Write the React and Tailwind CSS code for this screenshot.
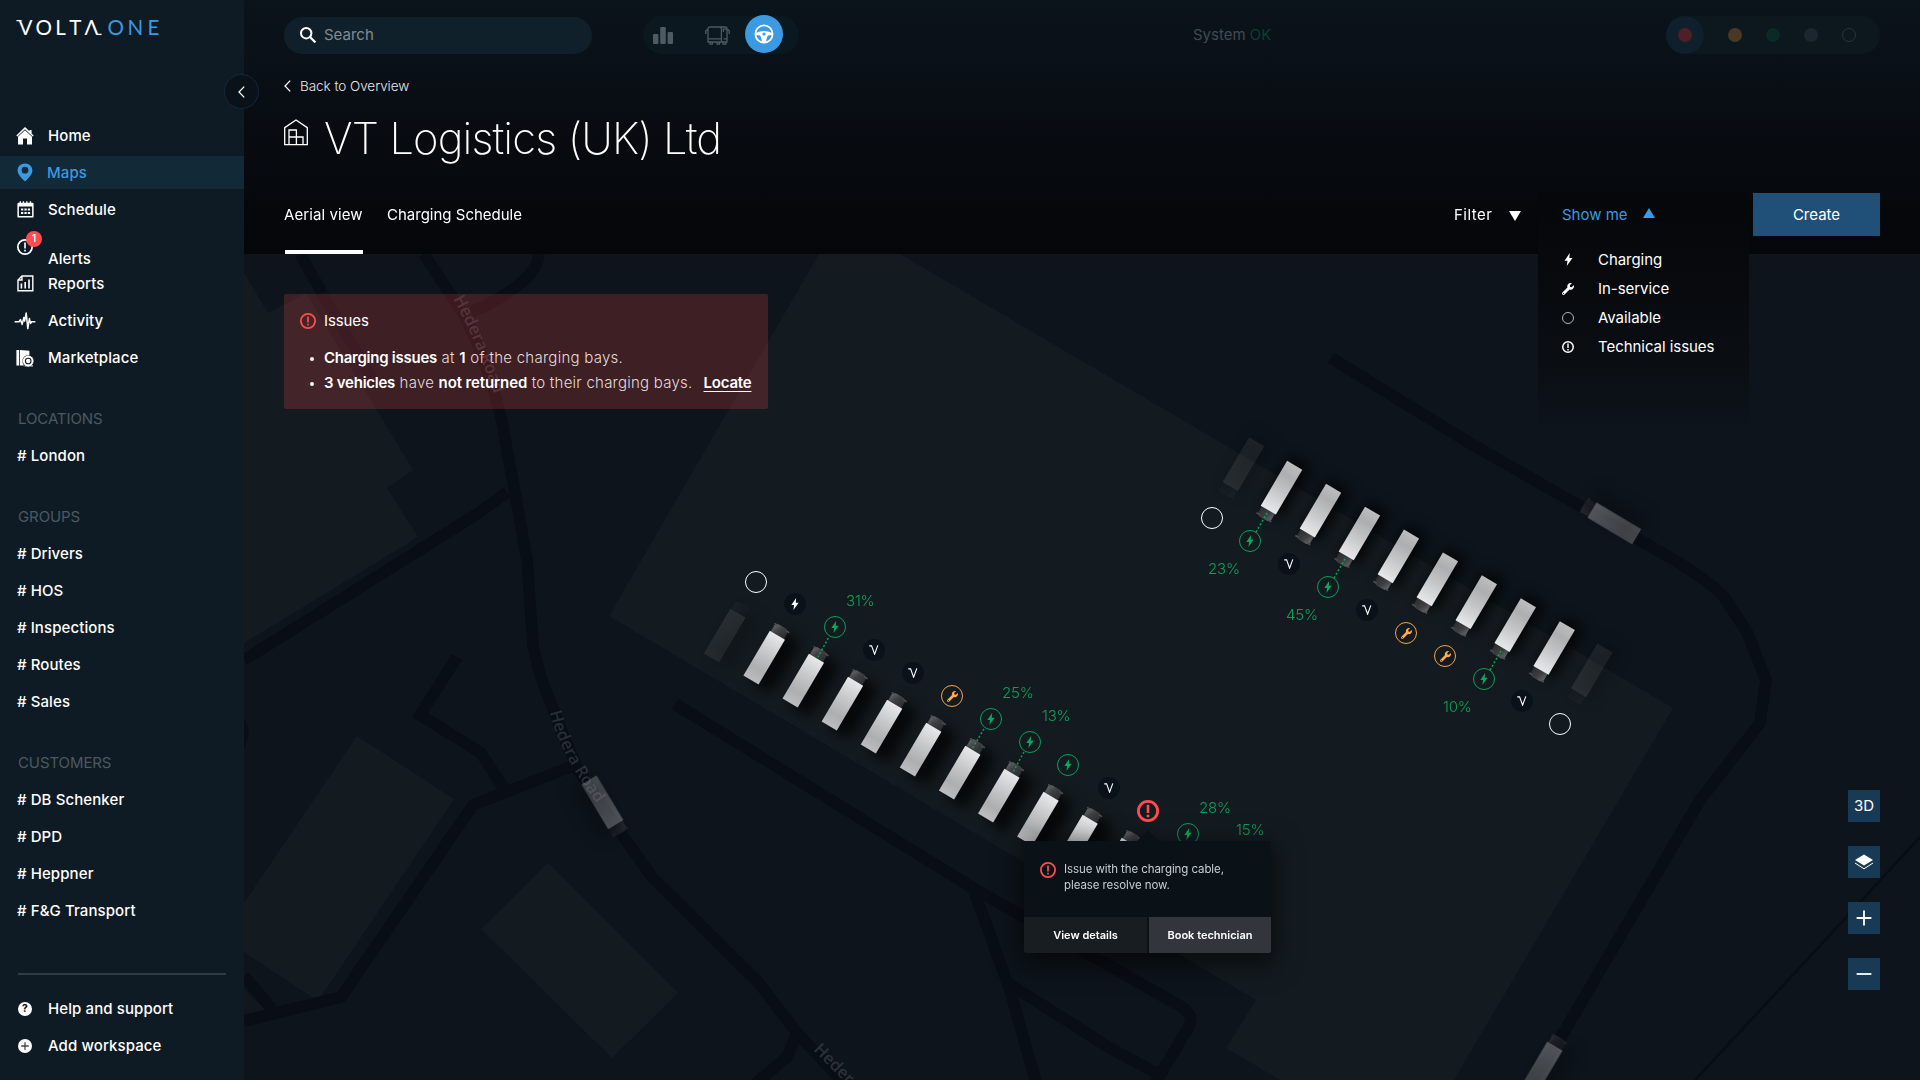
import React from "react";
import { FaWrench } from "react-icons/fa";

const MAP_X = 244;
const MAP_Y = 254;

/* ---------- icons ---------- */

const Bolt = ({ className = "" }) => (
  <svg viewBox="0 0 13 20" className={className} fill="currentColor">
    <path d="M8.4 0 L0.4 11.8 H5 L3.8 20 L12.6 7.8 H7.8 Z" />
  </svg>
);

const AlertCircle = ({ className = "", stroke = 2 }) => (
  <svg viewBox="0 0 16 16" className={className} fill="none" stroke="currentColor" strokeWidth={stroke}>
    <circle cx="8" cy="8" r={8 - stroke / 2} />
    <path d="M8 3.4 V9.4 M8 10.8 V12.6" strokeWidth={stroke * 0.95} />
  </svg>
);

const HomeIcon = () => (
  <svg viewBox="0 0 18 18" className="h-[18px] w-[18px]" fill="currentColor">
    <path d="M9 0 L0.3 8.4 L1.4 9.5 L9 2.2 L16.6 9.5 L17.7 8.4 L15.6 6.4 V3 H13.4 V4.3 Z" />
    <path d="M9 3.2 L2 9.8 V17.4 H7 V11.4 H11 V17.4 H16 V9.8 Z" />
  </svg>
);

const PinIcon = () => (
  <svg viewBox="0 0 16 19" className="mr-px h-[19px] w-4" fill="currentColor">
    <path fillRule="evenodd" d="M8 0.4 C3.7 0.4 0.6 3.5 0.6 7.5 C0.6 11.5 4.6 15 8 18.6 C11.4 15 15.4 11.5 15.4 7.5 C15.4 3.5 12.3 0.4 8 0.4 Z M8 3.8 A3.4 3.4 0 1 1 8 10.6 A3.4 3.4 0 1 1 8 3.8 Z" />
  </svg>
);

const CalendarIcon = () => (
  <svg viewBox="0 0 17 17" className="h-[17px] w-[17px]" fill="currentColor">
    <path fillRule="evenodd" d="M0.4 3 Q0.4 1.8 1.6 1.8 H15.4 Q16.6 1.8 16.6 3 V15.4 Q16.6 16.6 15.4 16.6 H1.6 Q0.4 16.6 0.4 15.4 Z M1.9 5.4 V15.1 H15.1 V5.4 Z" />
    <path d="M2.6 0.3h1.3v2h-1.3zM5.8 0.3h1.3v2h-1.3zM9.2 0.3h1.3v2h-1.3zM12.8 0.3h1.3v2h-1.3z" />
    <path d="M4 7.4h2.3v2H4zM7.4 7.4h2.3v2H7.4zM10.8 7.4h2.3v2h-2.3zM4 11h2.3v2H4zM7.4 11h2.3v2H7.4zM10.8 11h2.3v2h-2.3z" />
  </svg>
);

const ReportsIcon = () => (
  <svg viewBox="0 0 17 17" className="h-[17px] w-[17px]" fill="none" stroke="currentColor" strokeWidth="1.4">
    <path d="M5 1 H15.8 V15.8 H1 V5 Z M5 1 V5 H1" />
    <path d="M4.4 13.6 V8.4 M8.2 13.6 V7 M12 13.6 V4.6" strokeWidth="1.6" />
  </svg>
);

const ActivityIcon = () => (
  <svg viewBox="0 0 22 18" className="h-[18px] w-[22px]" fill="none" stroke="currentColor" strokeWidth="1.5" strokeLinejoin="round">
    <path d="M0.6 9.8 H5 L6.4 7.6 L8.2 12.4 L9.8 5.6 L10.6 9 L12.2 1 L13.8 16.6 L15.4 6.6 L16.6 11.4 L17.6 9.8 H21.4" />
  </svg>
);

const MarketplaceIcon = () => (
  <svg viewBox="0 0 18 18" className="h-[18px] w-[18px]">
    <path d="M0.4 1 H3 V16.6 H0.4 Z M3.8 1 L13.4 1.8 V6.2 Q8 5.6 6.6 10.4 Q6 14 8 16.6 H3.8 Z" fill="currentColor" />
    <circle cx="12.2" cy="12" r="5.4" fill="currentColor" />
    <circle cx="12.2" cy="12" r="2.8" fill="none" stroke="#0f1b24" strokeWidth="1.1" />
    <path d="M8.6 16.4 H17 V17.4 H8.6 Z" fill="currentColor" />
  </svg>
);

const BarsIcon = () => (
  <svg viewBox="0 0 20 17" className="h-[17px] w-5" fill="#4d5a61">
    <rect x="0" y="7" width="5.4" height="10" rx="1" />
    <rect x="7.2" y="0" width="5.6" height="17" rx="1" />
    <rect x="14.6" y="5" width="5.4" height="12" rx="1" />
  </svg>
);

const BusIcon = () => (
  <svg viewBox="0 0 25 19" className="h-[19px] w-[25px]" fill="none" stroke="#4d5a61" strokeWidth="1.3">
    <path d="M3 14 V3 Q3 1 5 1 H14.4 Q16.4 1 16.4 3 V16 H3 Z M3 12.8 H16.4" />
    <path d="M15 1 H20 Q22 1 22 3 V16 H17 M18.4 6 V3.2 H21.8 M18.6 12.8 H22" />
    <path d="M0.8 4 V8 M24.2 4 V8 M1 4 H3 M22 4 H24" />
    <path d="M5 16 V18.2 H7.4 V16 M12 16 V18.2 H14.4 V16 M18 16 V18.2 H20.8 V16" />
  </svg>
);

const WheelIcon = () => (
  <svg viewBox="0 0 20 20" className="h-5 w-5">
    <circle cx="10" cy="10" r="8.6" fill="none" stroke="#fff" strokeWidth="1.8" />
    <path d="M1.8 8.8 Q10 5 18.2 8.8 V11.2 H14.6 Q12.4 12.4 12.2 18 H7.8 Q7.6 12.4 5.4 11.2 H1.8 Z" fill="#fff" />
    <circle cx="10" cy="10" r="1.6" fill="#3b9ae1" />
  </svg>
);

const DepotIcon = () => (
  <svg viewBox="0 0 24 27" className="h-[27px] w-6" fill="none" stroke="#fff" strokeWidth="1.3">
    <path d="M0.7 25.6 V8.6 L12 1 L23.3 8.6 V25.6 Z" />
    <path d="M5 25.6 V11 H12.4 V25.6 M5 18 H19 V25.6" />
  </svg>
);

const ChevronLeft = ({ className = "" }) => (
  <svg viewBox="0 0 7 12" className={className} fill="none" stroke="#fff" strokeWidth="1.3">
    <path d="M6.2 0.6 L1 6 L6.2 11.4" />
  </svg>
);

const HelpIcon = () => (
  <span className="flex h-3.5 w-3.5 items-center justify-center rounded-full bg-white text-[10px] font-extrabold tracking-normal text-[#0f1b24]">?</span>
);

const PlusIcon = () => (
  <svg viewBox="0 0 14 14" className="h-3.5 w-3.5">
    <circle cx="7" cy="7" r="7" fill="#fff" />
    <path d="M7 3.2 V10.8 M3.2 7 H10.8" stroke="#3c4850" strokeWidth="1.3" />
  </svg>
);

const Logo = () => (
  <svg viewBox="0 0 150 28" className="h-7 w-[150px] overflow-visible" fontFamily="Lato, sans-serif" fontSize="20.6">
    <path d="M0.4 7.6 H5.6" stroke="#fff" strokeWidth="1.3" />
    <text y="22" x="2.6 19.4 39.2 53.2 68.4" fill="#fff" fontWeight="400">VOLTΛ</text>
    <path d="M82 21.4 H85.6" stroke="#fff" strokeWidth="1.3" />
    <text y="22" x="91.4 111.4 131.6" fill="#3b9ae1" fontWeight="400">ONE</text>
  </svg>
);

/* ---------- sidebar ---------- */

const NavRow = ({ icon, label, active }) => (
  <div className={`mb-1 flex h-[33px] items-center pl-3.5 ${active ? "bg-[#122938] text-[#3b9ae1]" : "text-white"}`}>
    <span className="flex w-[22px] justify-center">{icon}</span>
    <span className={`mt-0.5 ${active ? "ml-[11px]" : "ml-3"}`}>{label}</span>
  </div>
);

const Section = ({ title, items }) => (
  <div className="mt-7">
    <div className="mb-1 flex h-[33px] items-center pt-0.5 pl-[18px] font-normal tracking-[-0.1px] text-[#4b5961]">{title}</div>
    {items.map((t) => (
      <div key={t} className="mb-1 flex h-[33px] items-center gap-1 pt-0.5 pl-[17px]">
        <span>#</span>
        <span>{t}</span>
      </div>
    ))}
  </div>
);

const Sidebar = () => (
  <aside className="relative z-20 h-[1080px] w-[244px] shrink-0 bg-[#0f1b24] text-[15px] font-medium tracking-[0.1px] text-white">
    <div className="flex h-[119px] items-start pt-[13px] pl-4">
      <Logo />
    </div>
    <button className="absolute top-[74px] left-[224px] flex h-[35px] w-[35px] items-center justify-center rounded-full border border-[#12293a] bg-[#0a1118]">
      <ChevronLeft className="h-3 w-[7px]" />
    </button>
    <NavRow icon={<HomeIcon />} label="Home" />
    <NavRow icon={<PinIcon />} label="Maps" active />
    <NavRow icon={<CalendarIcon />} label="Schedule" />
    <div className="mb-1 flex h-[33px] items-center pl-3.5">
      <span className="relative flex w-[22px] justify-center">
        <AlertCircle className="h-4 w-4" stroke={1.7} />
        <span className="absolute -top-2 left-3 flex h-4 w-4 items-center justify-center rounded-full bg-[#ff4d4f] text-[11px] tracking-normal">1</span>
      </span>
      <span className="mt-[26px] ml-3">Alerts</span>
    </div>
    <NavRow icon={<ReportsIcon />} label="Reports" />
    <NavRow icon={<ActivityIcon />} label="Activity" />
    <NavRow icon={<MarketplaceIcon />} label="Marketplace" />
    <Section title="LOCATIONS" items={["London"]} />
    <Section title="GROUPS" items={["Drivers", "HOS", "Inspections", "Routes", "Sales"]} />
    <Section title="CUSTOMERS" items={["DB Schenker", "DPD", "Heppner", "F&G Transport"]} />
    <div className="mx-[18px] mt-[46px] mb-[17px] h-0.5 bg-[#2f3c45]" />
    <NavRow icon={<HelpIcon />} label="Help and support" />
    <NavRow icon={<PlusIcon />} label="Add workspace" />
  </aside>
);

/* ---------- header ---------- */

const TopBar = () => (
  <div className="flex h-[38px] items-center">
    <div className="flex h-[37px] w-[308px] items-center rounded-full bg-[#10202b] pl-4">
      <svg viewBox="0 0 16 16" className="h-4 w-4" fill="none" stroke="#fff" strokeWidth="2">
        <circle cx="6.2" cy="6.2" r="5.2" />
        <path d="M10 10 L15.4 15.4" strokeWidth="2.2" />
      </svg>
      <span className="ml-2 text-[15px] text-[#828b91]">Search</span>
    </div>
    <div className="ml-[51px] flex h-[38px] w-[156px] items-center rounded-full bg-[#0c181f] pl-2.5">
      <BarsIcon />
      <span className="ml-8">
        <BusIcon />
      </span>
      <span className="mb-0.5 ml-[15px] flex h-[38px] w-[38px] items-center justify-center rounded-full bg-[#3b9ae1]">
        <WheelIcon />
      </span>
    </div>
    <div className="ml-[394px] text-[15px] tracking-[0px] text-[#414a50]">
      System <span className="text-[#08402c]">OK</span>
    </div>
    <div className="ml-auto flex h-[38px] w-[214px] items-center rounded-full bg-[#0c171e]">
      <span className="flex h-[38px] w-[38px] items-center justify-center rounded-full bg-[#0f1f2b]">
        <span className="h-3.5 w-3.5 rounded-full bg-[#4c2026]" />
      </span>
      <span className="ml-6 h-3.5 w-3.5 rounded-full bg-[#4a3826]" />
      <span className="ml-6 h-3.5 w-3.5 rounded-full bg-[#0b2a23]" />
      <span className="ml-6 h-3.5 w-3.5 rounded-full bg-[#1c262e]" />
      <span className="ml-6 h-3.5 w-3.5 rounded-full border border-[#29333a]" />
    </div>
  </div>
);

const MENU = [
  { label: "Charging", icon: <Bolt className="h-[13px] w-[9px]" /> },
  { label: "In-service", icon: <FaWrench className="h-3 w-3" /> },
  { label: "Available", icon: <span className="h-3 w-3 rounded-full border border-[#aeb3b6]" /> },
  { label: "Technical issues", icon: <AlertCircle className="h-3 w-3" stroke={2} /> },
];

const ShowMe = () => (
  <div className="z-10 ml-[17px] h-[232px] w-[211px] bg-linear-to-b from-[#050709] via-[#090c10] via-60% to-[#0d131a] pl-6">
    <div className="flex h-[43px] items-center text-[#3b9ae1]">
      <span className="mt-0.5 w-[81px] tracking-[0px]">Show me</span>
      <svg viewBox="0 0 12 10" className="mb-1 h-2.5 w-3" fill="currentColor">
        <path d="M6 0 L12 10 H0 Z" />
      </svg>
    </div>
    <div className="mt-[9px]">
      {MENU.map((m) => (
        <div key={m.label} className="flex h-[29px] items-center text-white">
          <span className="flex w-3 justify-center">{m.icon}</span>
          <span className="mt-0.5 ml-6 tracking-[-0.05px]">{m.label}</span>
        </div>
      ))}
    </div>
  </div>
);

const Header = () => (
  <header className="relative z-10 h-[254px] bg-linear-to-b from-[#0b141b] via-[#080c12] via-50% to-[#040608] px-10 pt-4 text-white">
    <TopBar />
    <div className="mt-[22px] flex h-5 items-center">
      <ChevronLeft className="h-3 w-[7px]" />
      <span className="ml-[9px] text-[13.5px] font-light tracking-[-0.05px] text-[#e6e8ea]">Back to Overview</span>
    </div>
    <div className="mt-3 flex h-[60px] items-center">
      <span className="-mt-3">
        <DepotIcon />
      </span>
      <h1 className="ml-4 text-[43.5px] leading-[60px] font-[250] tracking-[-0.87px] whitespace-nowrap">VT Logistics (UK) Ltd</h1>
    </div>
    <div className="mt-[25px] flex h-[61px] items-start text-[15px]">
      <div className="flex h-[61px] w-[79px] flex-col justify-between">
        <span className="flex h-[43px] items-center pt-0.5 tracking-[0.08px] whitespace-nowrap">Aerial view</span>
        <span className="ml-px h-1 bg-white" />
      </div>
      <span className="ml-6 flex h-[43px] items-center pt-0.5">Charging Schedule</span>
      <div className="ml-auto flex items-start">
        <div className="flex h-[43px] w-[67px] items-center justify-between">
          <span className="mt-0.5 tracking-[0.5px]">Filter</span>
          <svg viewBox="0 0 12 10" className="mt-0.5 h-2.5 w-3" fill="currentColor">
            <path d="M0 0 H12 L6 10 Z" />
          </svg>
        </div>
        <ShowMe />
        <button className="ml-1 h-[43px] w-[127px] bg-[#205078] pt-0.5">Create</button>
      </div>
    </div>
  </header>
);

/* ---------- map ---------- */

const range = (n) => Array.from({ length: n }, (_, i) => i);

const TRUCKS = [
  { x: 711.5, y: 658, r: 30.5, o: 0.1 },
  ...range(10).map((i) => ({ x: 751 + 39.1 * i, y: 680 + 23 * i, r: 30.5, o: 1 })),
  { x: 1256.7, y: 441.7, r: 210.5, o: 0.1 },
  ...range(8).map((i) => ({ x: 1294.7 + 38.95 * i, y: 465.3 + 22.9 * i, r: 210.5, o: 1 })),
  { x: 1605, y: 648, r: 210.5, o: 0.1 },
  { x: 1636.7, y: 536.7, r: -59.2, o: 0.32 },
  { x: 589, y: 780, r: 149, o: 0.3 },
  { x: 1528.5, y: 1091, r: 30.5, o: 0.32 },
];

const Truck = ({ x, y, r, o }) => (
  <g transform={`translate(${x} ${y}) rotate(${r})`} opacity={o}>
    <path d="M-7.6 -50 V-59 Q-7 -62 -3 -62 H4 Q7.4 -61.6 7.6 -58 V-50 Z" fill="url(#cab)" />
    <path d="M-8.6 -60.6 H-5 M5 -60.2 H9" stroke="#4b4c50" strokeWidth="1.6" />
    <rect x="-8.8" y="-52" width="17.6" height="52" fill="url(#body)" />
  </g>
);

const LINKS = [
  [828.3, 638, 818, 657],
  [984, 729, 972, 749],
  [1024, 752, 1013, 772],
  [1256, 532, 1267, 513],
  [1334, 578, 1345, 559],
  [1490, 670, 1501, 651],
];

const MapDrawing = () => (
  <svg viewBox="244 254 1676 826" className="absolute inset-0 h-[826px] w-[1676px]">
    <defs>
      <linearGradient id="body" x1="0" y1="0" x2="0" y2="1">
        <stop offset="0" stopColor="#e6e8ea" />
        <stop offset="0.4" stopColor="#c6c7c9" />
        <stop offset="0.75" stopColor="#adaeb0" />
        <stop offset="1" stopColor="#bdbdbf" />
      </linearGradient>
      <linearGradient id="cab" x1="0" y1="0" x2="1" y2="0.4">
        <stop offset="0" stopColor="#6a6b6f" />
        <stop offset="0.5" stopColor="#3f4044" />
        <stop offset="1" stopColor="#2f3034" />
      </linearGradient>
      <filter id="soft" x="-100%" y="-50%" width="300%" height="200%">
        <feGaussianBlur stdDeviation="7" />
      </filter>
      <path id="road1" d="M453 299 Q475 337 495 398" />
      <path id="road2" d="M550 712 Q560 758 608 818" />
      <path id="road3" d="M813 1050 L890 1128" />
    </defs>

    {/* buildings and yard */}
    <g fill="#141b20">
      <path d="M244 273 L268 313 L306 293 L413 470 L387 488 L418 537 L244 643 Z" />
      <path d="M357 736 L454 799 L318 1001 L244 952 V903 Z" />
      <path d="M548 863 L678 993 L612 1058 L481 929 Z" />
      <path d="M819 254 H900 L1673 708 L1454 1080 H1280 L1226 1048 L1256 1000 L609 616 Z" />
      <path d="M244 990 L266 1010 L244 1014 Z" opacity="0.6" />
    </g>

    {/* roads */}
    <g fill="none" stroke="#090d15" strokeWidth="11.5">
      <path d="M424 254 L461 310 Q484 350 501 417 L515 493 L527 560 L533 645 L540 675 L560 727 L578 770 L621 833 L652 877 L759 983 L797 1033 L851 1090" />
      <path d="M539 254 Q538 268 522 282 Q500 300 472 312" />
      <path d="M300 254 L322 293" />
      <path d="M322 293 L372 378" opacity="0.3" />
      <path d="M507 492 L480 512 L244 660" />
      <path d="M457 657 L420 715 L481 753 L505 790" />
      <path d="M573 766 L473 805 L341 997 L244 1021" />
      <path d="M244 976 L272 1009" />
      <path d="M675 704 L973 888 L1180 1006 Q1196 1016 1188 1028 L1154 1085" />
      <path d="M973 888 L1009 987 L1037 1085 M1006 982 L1110 1048 L1160 1075" />
      <path d="M797 1033 L787 1057 L754 1085" />
      <path d="M1331 358 L1468 442 L1641 541 Q1712 580 1726 600 L1747 632 L1766 680 L1760 723 L1700 800 L1561 1037 L1530 1085" />
      <path d="M1920 837 L1804 963 L1695 1080" strokeWidth="2.5" />
      <path d="M242 720 Q250 732 242 746" strokeWidth="5" />
    </g>
    <g stroke="#12202b" strokeWidth="1" opacity="0.35">
      {range(7).map((i) => (
        <path key={i} d={`M${774 + 39 * i} ${714 + 23 * i} l12 -20`} />
      ))}
    </g>

    {/* street names */}
    <g fill="#2b3138" fontFamily="'Open Sans', 'Noto Sans', sans-serif" fontSize="16.6" fontWeight="600">
      <text>
        <textPath href="#road1">Hedera Road</textPath>
      </text>
      <text>
        <textPath href="#road3">Hedera</textPath>
      </text>
    </g>

    {/* shadows */}
    <g filter="url(#soft)">
      {TRUCKS.map((t, i) => (
        <g key={i} transform={`translate(${t.x} ${t.y}) rotate(${t.r})`} opacity={t.o === 1 ? 0.75 : 0.18}>
          <rect x={t.r > 200 ? -16 : 0} y={t.r > 200 ? -54 : -58} width="24" height="60" fill="#000" />
        </g>
      ))}
    </g>
    {TRUCKS.map((t, i) => (
      <Truck key={i} {...t} />
    ))}
    <text fill="#8b9299" fillOpacity="0.25" fontFamily="'Open Sans', 'Noto Sans', sans-serif" fontSize="16.6" fontWeight="600">
      <textPath href="#road2">Hedera Road</textPath>
    </text>
    <g stroke="#0aa057" strokeWidth="1.5" strokeDasharray="2 2">
      {LINKS.map(([a, b, c, d]) => (
        <path key={a} d={`M${a} ${b} L${c} ${d}`} />
      ))}
    </g>
  </svg>
);

const MARKERS = [
  [756, 582, "free"], [795, 604, "bolt"], [835, 627, "charge"], [874, 650, "volta"], [913, 673, "volta"],
  [952, 696, "service"], [991, 719, "charge"], [1030, 742, "charge"], [1068, 765, "charge"], [1109, 788, "volta"],
  [1148, 811, "issue"], [1188, 834, "charge"],
  [1212, 518, "free"], [1250, 541, "charge"], [1289, 564, "volta"], [1328, 587, "charge"], [1367, 610, "volta"],
  [1406, 633, "service"], [1445, 656, "service"], [1484, 679, "charge"], [1522, 701, "volta"], [1560, 724, "free"],
];

const LEVELS = [
  [846, 601, "31%"], [1002, 693, "25%"], [1042, 716, "13%"], [1199, 808, "28%"], [1236, 830, "15%"],
  [1208, 569, "23%"], [1286, 615, "45%"], [1443, 707, "10%"],
];

const MARKER_STYLE = {
  free: "border border-white",
  bolt: "bg-[#0a1219] text-white",
  charge: "border border-[#0aa057] text-[#0aa85c]",
  volta: "bg-[#0a1219] text-white",
  service: "border border-[#f6a44a] text-[#ffab4a]",
  issue: "text-[#ff4d4f]",
};

const VoltaMark = () => (
  <svg viewBox="0 0 10 10" className="h-2.5 w-2.5" fill="none" stroke="currentColor" strokeWidth="1.1">
    <path d="M0.2 0.9 H2.6 L5.6 9.2 L8.8 0.4" />
  </svg>
);

const MARKER_ICON = {
  free: null,
  bolt: <Bolt className="h-3 w-2" />,
  charge: <Bolt className="h-3 w-2" />,
  volta: <VoltaMark />,
  service: <FaWrench className="h-[11px] w-[11px]" />,
  issue: <AlertCircle className="h-[22px] w-[22px]" stroke={2} />,
};

const IssuesCard = () => (
  <div className="absolute top-10 left-10 h-[115px] w-[484px] rounded-[2px] bg-[#ff4d4d]/20 px-4 pt-[17px] text-[15px] text-white">
    <div className="flex h-5 items-center">
      <AlertCircle className="h-4 w-4 text-[#ff4d4f]" stroke={1.8} />
      <span className="ml-2 tracking-[-0.1px]">Issues</span>
    </div>
    <ul className="mt-[15px] font-light whitespace-nowrap">
      <li className="flex h-[25px] items-center">
        <span className="mr-2.5 ml-2.5 h-1 w-1 shrink-0 rounded-full bg-white" />
        <p className="tracking-[0.26px] text-[#e4dcdd]">
          <b className="font-semibold tracking-[-0.25px] text-white">Charging issues</b> at <b className="font-semibold text-white">1</b> of the charging bays.
        </p>
      </li>
      <li className="flex h-[25px] items-center">
        <span className="mr-2.5 ml-2.5 h-1 w-1 shrink-0 rounded-full bg-white" />
        <p className="tracking-[0.24px] text-[#e4dcdd]">
          <b className="font-semibold tracking-[-0.25px] text-white">3 vehicles</b> have <b className="font-semibold tracking-[-0.1px] text-white">not returned</b> to their charging bays.
        </p>
        <a className="ml-[11px] font-semibold tracking-[-0.2px] underline underline-offset-[3px]">Locate</a>
      </li>
    </ul>
  </div>
);

const IssuePopup = () => (
  <div className="absolute top-[587px] left-[780px] h-[112px] w-[247px] rounded-[2px] bg-[#0a1218] shadow-[0_8px_24px_6px_rgba(0,0,0,0.5)]">
    <svg viewBox="0 0 24 12" className="absolute -top-[11px] left-[112px] h-3 w-6" fill="#0a1218">
      <path d="M0 12 L12 0 L24 12 Z" />
    </svg>
    <div className="flex h-[76px] items-start pt-[21px] pl-4">
      <AlertCircle className="h-4 w-4 text-[#ff4d4f]" stroke={1.8} />
      <p className="-mt-px ml-2 text-[11.5px] leading-4 font-normal tracking-[-0.08px] text-[#c9cdd0]">
        Issue with the charging cable,
        <br />
        please resolve now.
      </p>
    </div>
    <div className="flex h-9 gap-0.5 text-[11px] font-semibold text-white">
      <button className="w-[123px] rounded-bl-[2px] bg-[#181d21]">View details</button>
      <button className="w-[122px] rounded-br-[2px] bg-[#32353b]">Book technician</button>
    </div>
  </div>
);

const ctl = "flex h-8 w-8 items-center justify-center bg-[#183a55] text-white";

const MapControls = () => (
  <div className="absolute top-[536px] right-10 flex flex-col gap-6">
    <button className={`${ctl} text-[15px]`}>3D</button>
    <button className={ctl}>
      <svg viewBox="0 0 20 16" className="h-4 w-5">
        <path d="M10 0.4 L19 6 L10 11.6 L1 6 Z" fill="#fff" />
        <path d="M1 9 L10 14.8 L19 9" fill="none" stroke="#fff" strokeWidth="1" />
      </svg>
    </button>
    <button className={ctl}>
      <svg viewBox="0 0 16 16" className="mr-px mb-px h-4 w-4" stroke="#fff" strokeWidth="1.8">
        <path d="M8 0.6 V15.4 M0.6 8 H15.4" />
      </svg>
    </button>
    <button className={ctl}>
      <svg viewBox="0 0 16 16" className="mr-px mb-px h-4 w-4" stroke="#fff" strokeWidth="1.8">
        <path d="M0.6 8 H15.4" />
      </svg>
    </button>
  </div>
);

const MapView = () => (
  <section className="relative h-[826px] overflow-hidden bg-[#0d141b]">
    <MapDrawing />
    {MARKERS.map(([x, y, kind]) => (
      <span
        key={`${x}-${y}`}
        className={`absolute flex h-[22px] w-[22px] items-center justify-center rounded-full ${MARKER_STYLE[kind]}`}
        style={{ left: x - MAP_X - 11, top: y - MAP_Y - 11 }}
      >
        {MARKER_ICON[kind]}
      </span>
    ))}
    {LEVELS.map(([x, y, t]) => (
      <span
        key={t}
        className="absolute text-[15px] leading-5 font-light tracking-[-0.2px] text-[#0aa057]"
        style={{ left: x - MAP_X, top: y - MAP_Y - 10 }}
      >
        {t}
      </span>
    ))}
    <IssuesCard />
    <IssuePopup />
    <MapControls />
  </section>
);

export default function App() {
  return (
    <div className="flex h-[1080px] w-[1920px] overflow-hidden bg-[#0d141b] font-['Inter','Liberation_Sans',sans-serif]">
      <Sidebar />
      <main className="w-[1676px]">
        <Header />
        <MapView />
      </main>
    </div>
  );
}
